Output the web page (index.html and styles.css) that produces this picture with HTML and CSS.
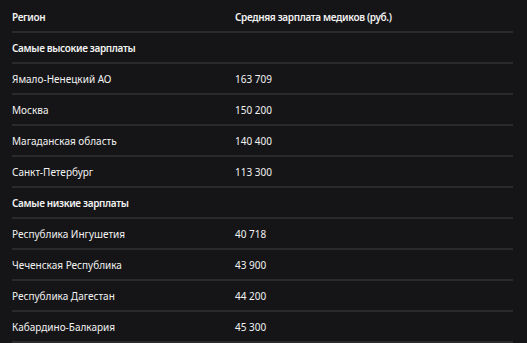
FILE: index.html
```html
<!DOCTYPE html>
<html lang="ru">
<head>
<meta charset="utf-8">
<link rel="stylesheet" href="styles.css">
</head>
<body>
<table class="salary">
  <thead>
    <tr><th>Регион</th><th>Средняя зарплата медиков (руб.)</th></tr>
  </thead>
  <tbody>
    <tr class="group"><td>Самые высокие зарплаты</td><td></td></tr>
    <tr><td>Ямало-Ненецкий АО</td><td>163 709</td></tr>
    <tr><td>Москва</td><td>150 200</td></tr>
    <tr><td>Магаданская область</td><td>140 400</td></tr>
    <tr><td>Санкт-Петербург</td><td>113 300</td></tr>
    <tr class="group"><td>Самые низкие зарплаты</td><td></td></tr>
    <tr><td>Республика Ингушетия</td><td>40 718</td></tr>
    <tr><td>Чеченская Республика</td><td>43 900</td></tr>
    <tr><td>Республика Дагестан</td><td>44 200</td></tr>
    <tr><td>Кабардино-Балкария</td><td>45 300</td></tr>
  </tbody>
</table>
</body>
</html>
```
FILE: styles.css
```css
html, body {
  margin: 0;
  background: #151517;
}
body {
  padding: 2px 14px 0 12px;
  font-family: "Noto Sans", "Open Sans", sans-serif;
  font-size: 10px;
  color: #f2f2f2;
}
.salary {
  width: 501px;
  border-collapse: collapse;
}
.salary th, .salary td {
  height: 29px;
  padding: 0;
  text-align: left;
  vertical-align: middle;
  border-bottom: 2px solid #2a2a2d;
  line-height: 14px;
}
.salary th {
  font-weight: 600;
  letter-spacing: -0.35px;
}
.salary th:first-child, .salary td:first-child {
  width: 223px;
}
.salary .group td {
  font-weight: 600;
  letter-spacing: -0.35px;
}
```
